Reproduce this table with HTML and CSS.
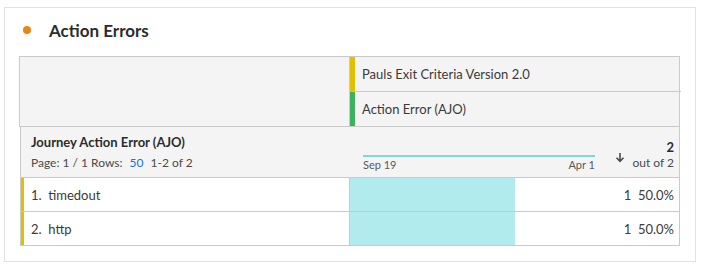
FILE: index.html
```html
<!DOCTYPE html>
<html>
<head>
<meta charset="utf-8">
<link rel="stylesheet" href="styles.css">
</head>
<body>
<div class="card">
  <div class="title-row">
    <span class="dot"></span>
    <h1 class="title">Action Errors</h1>
  </div>
  <div class="table">
    <div class="thead">
      <div class="thead-left"></div>
      <div class="thead-right">
        <div class="seg seg-yellow">Pauls Exit Criteria Version 2.0</div>
        <div class="seg seg-green">Action Error (AJO)</div>
      </div>
    </div>
    <div class="tbody">
      <div class="subhead">
        <div class="dim">
          <div class="dim-name">Journey Action Error (AJO)</div>
          <div class="pager">Page: 1 / 1 Rows: <span class="rows">50</span> 1-2 of 2</div>
        </div>
        <div class="metric">
          <div class="spark">
            <div class="spark-line"></div>
            <div class="spark-labels"><span>Sep 19</span><span>Apr 1</span></div>
          </div>
          <div class="sort">
            <svg width="10" height="11" viewBox="0 0 10 11"><path d="M5 1v8M1.5 5.8L5 9.3l3.5-3.5" fill="none" stroke="#4b4b4b" stroke-width="1.6"/></svg>
          </div>
          <div class="total">
            <div class="total-num">2</div>
            <div class="total-of">out of 2</div>
          </div>
        </div>
      </div>
      <div class="row">
        <div class="cell-dim">1.&nbsp; timedout</div>
        <div class="cell-metric"><div class="bar" style="width:50%"></div><span class="val">1&nbsp; 50.0%</span></div>
      </div>
      <div class="row">
        <div class="cell-dim">2.&nbsp; http</div>
        <div class="cell-metric"><div class="bar" style="width:50%"></div><span class="val">1&nbsp; 50.0%</span></div>
      </div>
    </div>
  </div>
</div>
</body>
</html>
```
FILE: styles.css
```css
* { box-sizing: border-box; }
body {
  margin: 0;
  background: #fff;
  font-family: Lato, "Open Sans", sans-serif;
  color: #323232;
}
.card {
  margin: 7px 0 0 4px;
  width: 692px;
  height: 255px;
  border: 1px solid #e1e1e1;
  background: #fff;
}
.title-row {
  display: flex;
  align-items: center;
  height: 48px;
  padding-left: 18px;
  padding-bottom: 4px;
}
.dot {
  width: 8px;
  height: 8px;
  border-radius: 50%;
  background: #e68619;
  margin-right: 18px;
}
.title {
  margin: 0;
  font-size: 17px;
  font-weight: 700;
  color: #2c2c2c;
}
.table {
  margin-left: 14px;
  width: 661px;
}
.thead {
  display: grid;
  grid-template-columns: 330px 331px;
  height: 71px;
  border: 1px solid #cacaca;
  background: #f4f4f4;
}
.thead-left {
  border-right: 1px solid #cacaca;
}
.thead-right {
  display: flex;
  flex-direction: column;
}
.seg {
  height: 35px;
  display: flex;
  align-items: center;
  padding-left: 7px;
  font-size: 13px;
  color: #3a3a3a;
  border-left: 5px solid #e5c000;
}
.seg-yellow {
  border-left-color: #e2bf00;
  border-bottom: 1px solid #cacaca;
  height: 35px;
}
.seg-green {
  border-left-color: #3eb15d;
  height: 34px;
}
.tbody {
  margin-left: 1px;
  width: 660px;
  border: 1px solid #cacaca;
  border-top: none;
}
.subhead {
  display: grid;
  grid-template-columns: 329px 329px;
  height: 51px;
  background: #f4f4f4;
  border-bottom: 1px solid #cacaca;
}
.dim {
  padding: 7px 0 0 10px;
}
.dim-name {
  font-size: 13px;
  font-weight: 700;
  color: #2c2c2c;
  line-height: 16px;
}
.pager {
  margin-top: 5px;
  font-size: 12px;
  color: #4b4b4b;
  line-height: 15px;
}
.rows {
  color: #1473e6;
  margin: 0 4px;
}
.metric {
  display: flex;
  padding: 0 5px 0 13px;
}
.spark {
  width: 232px;
  padding-top: 28px;
}
.spark-line {
  height: 2px;
  background: #7fd9dc;
}
.spark-labels {
  display: flex;
  justify-content: space-between;
  font-size: 11px;
  line-height: 13px;
  color: #5a5a5a;
  margin-top: 1px;
}
.sort {
  margin-left: 20px;
  padding-top: 20px;
}
.total {
  margin-left: auto;
  text-align: right;
  padding-top: 13px;
}
.total-num {
  font-size: 13px;
  font-weight: 700;
  line-height: 15px;
  color: #2c2c2c;
}
.total-of {
  font-size: 12px;
  line-height: 15px;
  color: #4b4b4b;
}
.row {
  display: grid;
  grid-template-columns: 329px 329px;
  height: 33px;
}
.row + .row {
  height: 34px;
  border-top: 1px solid #cacaca;
}
.cell-dim {
  display: flex;
  align-items: center;
  border-left: 3px solid #e2bf00;
  padding-left: 7px;
  font-size: 13px;
  color: #3a3a3a;
  border-right: 1px solid #cacaca;
}
.cell-metric {
  position: relative;
  display: flex;
  align-items: center;
  justify-content: flex-end;
  padding-right: 5px;
  font-size: 13px;
  color: #3a3a3a;
}
.bar {
  position: absolute;
  left: 0;
  top: 0;
  bottom: 0;
  background: #b2ebee;
}
.val {
  position: relative;
}
```
